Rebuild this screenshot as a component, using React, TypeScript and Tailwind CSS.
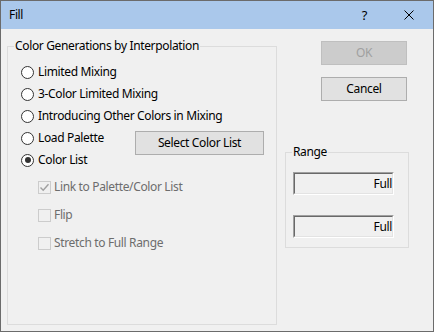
import React from 'react';

const font = { fontFamily: '"Noto Sans", "Segoe UI", sans-serif' };

const Radio: React.FC<{ label: string; checked?: boolean }> = ({ label, checked }) => (
  <div className="flex h-[22px] items-center">
    <span className="flex h-[13px] w-[13px] items-center justify-center rounded-full border border-[#333333] bg-white">
      {checked && <span className="h-[6px] w-[6px] rounded-full bg-[#333333]" />}
    </span>
    <span className="ml-[4px] text-black">{label}</span>
  </div>
);

const Check: React.FC<{ label: string; checked?: boolean }> = ({ label, checked }) => (
  <div className="flex h-[28px] items-center">
    <span className="flex h-[13px] w-[13px] items-center justify-center border border-[#cccccc] bg-[#f0f0f0]">
      {checked && (
        <svg width="11" height="11" viewBox="0 0 11 11">
          <path d="M1.5 5.5 L4.2 8.2 L9.5 2.2" fill="none" stroke="#a0a0a0" strokeWidth="1.4" />
        </svg>
      )}
    </span>
    <span className="ml-[3px] text-[#6d6d6d]">{label}</span>
  </div>
);

const Field: React.FC<{ value: string }> = ({ value }) => (
  <div className="w-[101px] border border-t-[#a0a0a0] border-l-[#a0a0a0] border-b-white border-r-white">
    <div className="flex h-[21px] items-center justify-end border border-t-[#696969] border-l-[#696969] border-b-[#e3e3e3] border-r-[#e3e3e3] bg-[#f0f0f0] text-black">
      {value}
    </div>
  </div>
);

export default function App() {
  return (
    <div
      className="flex h-[332px] w-[434px] flex-col border border-[#6b6b6b] bg-[#f0f0f0] text-[12px] leading-[16px] tracking-[-0.35px]"
      style={font}
    >
      <div className="flex h-[28px] shrink-0 items-center bg-[#aac8eb] pl-[8px] text-black">
        <span className="flex-1">Fill</span>
        <span className="mr-[37px] text-[13px]">?</span>
        <svg width="10" height="10" viewBox="0 0 10 10" className="mr-[19px]">
          <path d="M0.5 0.5 L9.5 9.5 M9.5 0.5 L0.5 9.5" stroke="#000" strokeWidth="1" />
        </svg>
      </div>

      <div className="flex flex-1 items-start">
        <fieldset className="ml-[6px] mt-[9px] h-[287px] w-[270px] border border-[#dcdcdc] pl-[13px]">
          <legend className="ml-[-7px] px-[1px] text-black">Color Generations by Interpolation</legend>
          <div className="mt-[7px] flex flex-col">
            <Radio label="Limited Mixing" />
            <Radio label="3-Color Limited Mixing" />
            <Radio label="Introducing Other Colors in Mixing" />
            <div className="flex h-[22px] items-start">
              <div className="w-[114px]">
                <Radio label="Load Palette" />
              </div>
              <button className="mt-[4px] h-[24px] w-[129px] shrink-0 border border-[#adadad] bg-[#e1e1e1] text-black">
                Select Color List
              </button>
            </div>
            <Radio label="Color List" checked />
            <div className="ml-[17px] mt-[2px] flex flex-col">
              <Check label="Link to Palette/Color List" checked />
              <Check label="Flip" />
              <Check label="Stretch to Full Range" />
            </div>
          </div>
        </fieldset>

        <div className="ml-[8px] mt-[12px] flex w-[124px] flex-col">
          <button className="ml-[36px] h-[24px] w-[86px] border border-[#bfbfbf] bg-[#cccccc] text-[#a0a0a0]">
            OK
          </button>
          <button className="ml-[36px] mt-[12px] h-[24px] w-[86px] border border-[#adadad] bg-[#e1e1e1] text-black">
            Cancel
          </button>
          <fieldset className="mt-[43px] w-[124px] border border-[#dcdcdc] pb-[9px] pl-[7px]">
            <legend className="ml-[-1px] px-[1px] text-black">Range</legend>
            <div className="mt-[12px]">
              <Field value="Full" />
            </div>
            <div className="mt-[20px]">
              <Field value="Full" />
            </div>
          </fieldset>
        </div>
      </div>
    </div>
  );
}
